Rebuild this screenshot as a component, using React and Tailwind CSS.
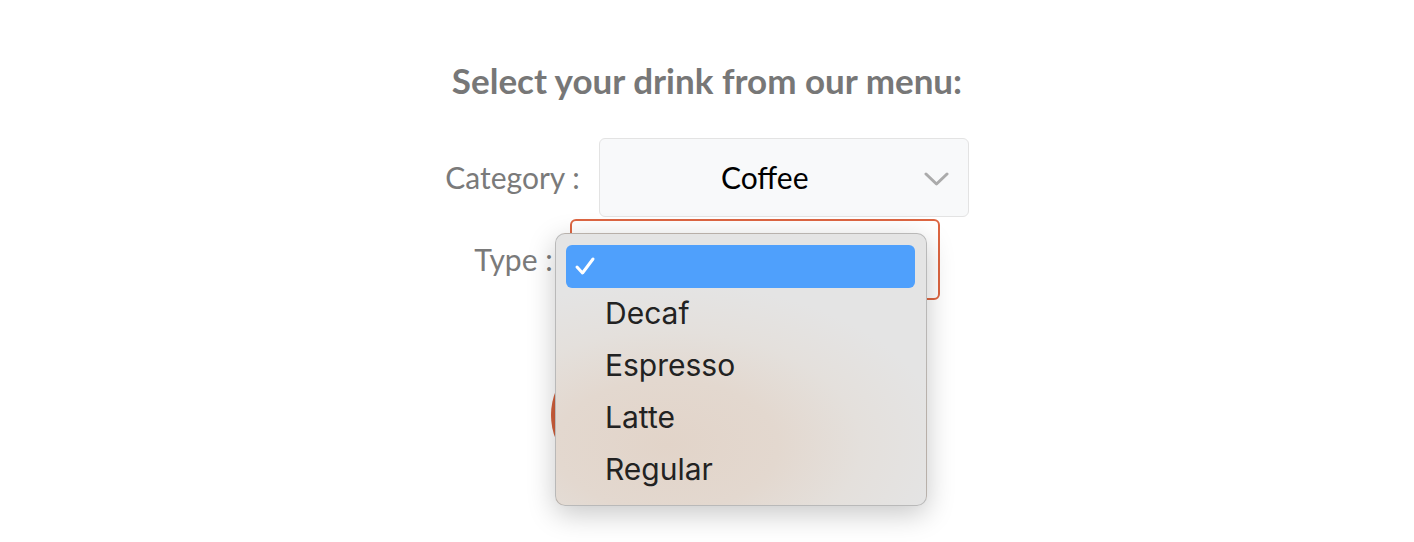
export default function App() {
  const items = ["Decaf", "Espresso", "Latte", "Regular"];
  return (
    <div className="w-full min-h-[542px] bg-white flex flex-col items-center font-['Lato',sans-serif]">
      <h1 className="mt-[56px] text-[35px] leading-[48px] font-bold text-[#777777]">
        Select your drink from our menu:
      </h1>
      <div className="mt-[34px] flex flex-col items-center gap-[2px]">
        <div className="flex items-center gap-[19px]">
          <span className="text-[30px] text-[#7a7a7a]">Category :</span>
          <div className="relative w-[370px] h-[79px] rounded-[6px] border border-[#e3e3e3] bg-[#f8f9fa] flex items-center justify-center pr-[38px] text-[30px] text-black">
            Coffee
            <svg className="absolute right-[19px] top-[33px]" width="25" height="14" viewBox="0 0 25 14">
              <polyline points="2,2 12.5,12 23,2" fill="none" stroke="#ababab" strokeWidth="3" strokeLinecap="round" strokeLinejoin="round" />
            </svg>
          </div>
        </div>
        <div className="flex items-center gap-[17px]">
          <span className="text-[30px] text-[#7a7a7a]">Type :</span>
          <div className="w-[370px] h-[81px] rounded-[6px] border-2 border-[#dd6642] bg-white" />
        </div>
      </div>
      <div className="mt-[50px] w-[312px] h-[130px] rounded-full bg-[#d2603c]" />
      <div className="absolute left-[555px] top-[233px] w-[372px] h-[273px] rounded-[10px] border border-[#00000030] bg-[radial-gradient(ellipse_75%_60%_at_30%_78%,#e2d4c9_0%,#e3d8cf_40%,#e4e0dc_70%,#e4e4e4_100%)] shadow-[0_8px_28px_rgba(0,0,0,0.22)] pt-[6px] pb-[7px] font-['Inter',sans-serif] text-[30px] text-[#222222] z-10">
        <div className="h-[52px] flex items-center">
          <div className="mx-[10px] h-[43px] w-[349px] rounded-[6px] bg-[#4fa0fc] flex items-center pl-[8px]">
            <svg width="22" height="20" viewBox="0 0 22 20">
              <polyline points="3,11 8.5,17 19,3" fill="none" stroke="white" strokeWidth="3" strokeLinecap="round" strokeLinejoin="round" />
            </svg>
          </div>
        </div>
        {items.map((t) => (
          <div key={t} className="h-[52px] flex items-center pl-[49px] pb-[9px]">
            {t}
          </div>
        ))}
      </div>
    </div>
  );
}
